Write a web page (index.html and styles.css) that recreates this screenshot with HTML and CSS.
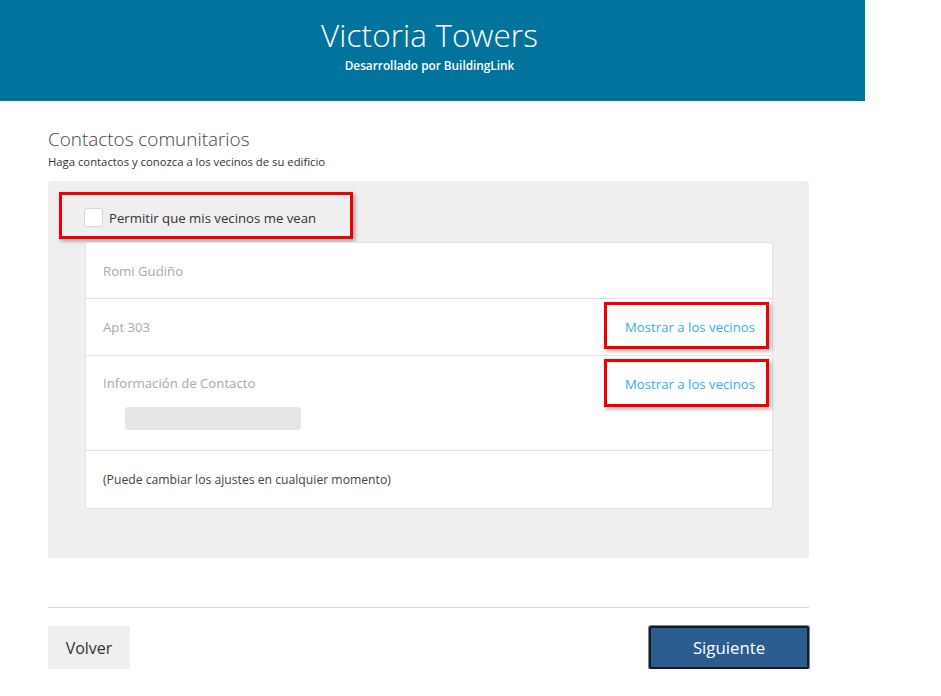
FILE: index.html
```html
<!DOCTYPE html>
<html lang="es">
<head>
<meta charset="utf-8">
<link rel="stylesheet" href="styles.css">
</head>
<body>
<header class="header">
  <h1 class="title">Victoria Towers</h1>
  <div class="subtitle">Desarrollado por BuildingLink</div>
</header>
<main class="content">
  <h2 class="section-title">Contactos comunitarios</h2>
  <p class="section-sub">Haga contactos y conozca a los vecinos de su edificio</p>
  <div class="panel">
    <label class="check-box">
      <span class="checkbox"></span>
      <span class="check-label">Permitir que mis vecinos me vean</span>
    </label>
    <div class="card">
      <div class="row row-name"><span class="muted">Romi Gudiño</span></div>
      <div class="row row-apt">
        <span class="muted">Apt 303</span>
        <span class="link-box link-box-apt"><a class="link">Mostrar a los vecinos</a></span>
      </div>
      <div class="row row-contact">
        <div class="contact-top">
          <span class="muted">Información de Contacto</span>
          <span class="link-box link-box-contact"><a class="link">Mostrar a los vecinos</a></span>
        </div>
        <div class="placeholder"></div>
      </div>
      <div class="row row-note"><span class="note">(Puede cambiar los ajustes en cualquier momento)</span></div>
    </div>
  </div>
  <hr class="divider">
  <div class="actions">
    <button class="btn btn-back">Volver</button>
    <button class="btn btn-next">Siguiente</button>
  </div>
</main>
</body>
</html>
```
FILE: styles.css
```css
html, body {
  margin: 0;
  padding: 0;
  background: #ffffff;
  font-family: "Open Sans", "Liberation Sans", sans-serif;
  color: #333;
}
.header {
  width: 865px;
  height: 101px;
  background: #02739c;
  color: #fff;
  text-align: center;
  box-sizing: border-box;
  padding-top: 15px;
}
.title {
  margin: 0;
  font-size: 31.5px;
  font-weight: 300;
  line-height: 40px;
  letter-spacing: 0.1px;
  padding-right: 6px;
}
.subtitle {
  font-size: 11.8px;
  font-weight: 600;
  line-height: 16px;
  margin-top: 2px;
  padding-right: 6px;
}
.content {
  width: 761px;
  margin-left: 48px;
  padding-top: 126px;
  margin-top: -101px;
}
.section-title {
  margin: 0;
  font-size: 18.9px;
  font-weight: 300;
  color: #444;
  line-height: 26px;
}
.section-sub {
  margin: 2px 0 0;
  font-size: 11.3px;
  line-height: 16px;
  color: #333;
}
.panel {
  margin-top: 11px;
  background: #efefef;
  border-radius: 3px;
  height: 377px;
  box-sizing: border-box;
  padding: 11px 36px 0 11px;
}
.check-box {
  display: flex;
  align-items: center;
  width: 294px;
  height: 47px;
  box-sizing: border-box;
  border: 3px solid #ee0000;
  box-shadow: 2px 2px 4px rgba(0,0,0,0.35);
  padding-left: 22px;
  padding-top: 4px;
}
.checkbox {
  width: 17px;
  height: 17px;
  background: #fff;
  border: 1px solid #d6d6d6;
  border-radius: 3px;
  margin-right: 6px;
}
.check-label {
  font-size: 13.2px;
  color: #333;
}
.card {
  margin-left: 26px;
  margin-top: 3px;
  background: #fff;
  border: 1px solid #e2e2e2;
  border-radius: 3px;
}
.row {
  border-bottom: 1px solid #e2e2e2;
  padding-left: 17px;
  padding-right: 3px;
  box-sizing: border-box;
  display: flex;
  align-items: center;
  justify-content: space-between;
  font-size: 13.2px;
}
.row:last-child { border-bottom: none; }
.row-name { height: 56px; }
.row-apt { height: 57px; }
.row-note { height: 57px; }
.row-contact {
  height: 95px;
  flex-direction: column;
  align-items: stretch;
  justify-content: flex-start;
  padding-top: 3px;
}
.contact-top {
  display: flex;
  align-items: center;
  justify-content: space-between;
}
.muted { color: #aaaaaa; }
.note { color: #444; font-size: 12.2px; }
.link-box {
  display: flex;
  align-items: center;
  width: 165px;
  height: 47px;
  box-sizing: border-box;
  border: 3px solid #ee0000;
  box-shadow: 2px 2px 4px rgba(0,0,0,0.35);
  padding-left: 18px;
}
.link-box-apt {
  margin-bottom: 4px;
  padding-top: 4px;
}
.link-box-contact {
  height: 48px;
  padding-top: 2px;
}
.link {
  color: #3aade2;
  font-size: 13.2px;
}
.placeholder {
  width: 176px;
  height: 23px;
  background: #e6e6e6;
  border-radius: 3px;
  margin-left: 22px;
  margin-top: 0;
}
.divider {
  margin: 49px 0 0;
  border: none;
  border-top: 1px solid #d6d6d6;
  height: 0;
}
.actions {
  margin-top: 18px;
  display: flex;
  justify-content: space-between;
}
.btn {
  height: 43px;
  font-family: "Open Sans", "Liberation Sans", sans-serif;
  font-size: 16px;
  border-radius: 0;
  cursor: pointer;
}
.btn-back {
  width: 82px;
  background: #efefef;
  border: none;
  color: #333;
}
.btn-next {
  width: 160px;
  font-size: 16.8px;
  background: #2b5d8e;
  color: #fff;
  border: 2px solid #1a1a1a;
  border-radius: 2px;
  box-shadow: 0 0 0 1px #6f8aa6;
}
```
